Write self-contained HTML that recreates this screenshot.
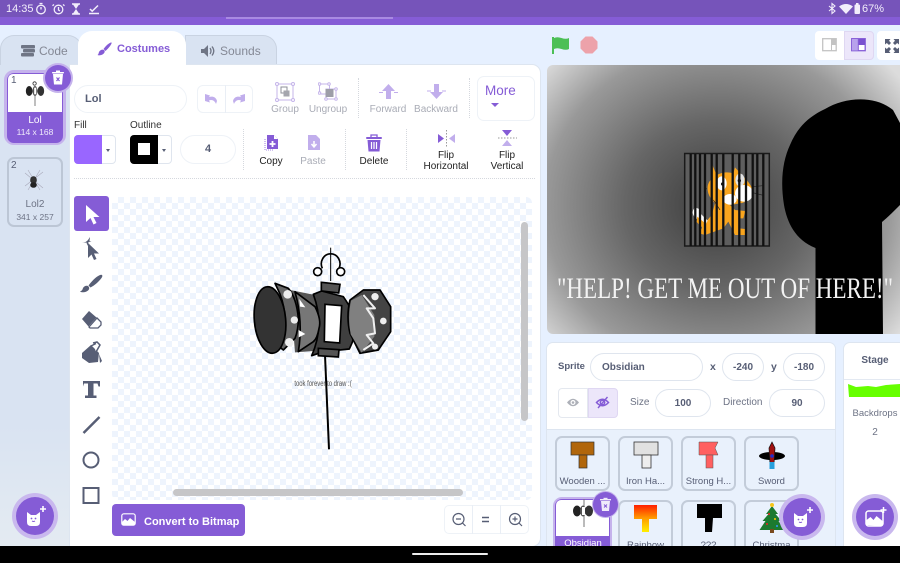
<!DOCTYPE html>
<html><head><meta charset="utf-8"><style>
html,body{margin:0;padding:0;width:900px;height:563px;overflow:hidden;background:#e6f0ff}
body{position:relative;font-family:"Liberation Sans",sans-serif;color:#575e75}
.a,.t,svg{position:absolute}
.t{white-space:nowrap;line-height:1;font-size:10px}
.c{transform:translateX(-50%)}
.lab{font-size:10px;color:#a9acb6}
.blk{font-size:10px;color:#222}
.sep{position:absolute;width:0;border-left:1px dotted #d5d8de}
.pill{position:absolute;background:#fff;border:1px solid #eef2f7;border-radius:16px;box-sizing:border-box;text-align:center;font-weight:bold;font-size:10px;color:#575e75}
.tile{position:absolute;width:55px;height:55px;box-sizing:border-box;border:2px solid #c3ccd9;border-radius:7px;background:#e9f1fc;overflow:hidden}
.tile span{position:absolute;left:0;right:0;top:39px;text-align:center;font-size:9.5px;color:#575e75;line-height:1;white-space:nowrap}
</style></head><body>
<!-- status bar -->
<div class="a" style="left:0;top:0;width:900px;height:17px;background:#7654ba"></div>
<div class="a" style="left:0;top:17px;width:900px;height:8px;background:#855cd6"></div>
<div class="a" style="left:226px;top:17px;width:167px;height:2px;background:#a98ae2"></div>
<span class="t" style="left:6px;top:4px;font-size:11px;color:#f2edfb">14:35</span>
<svg style="left:35px;top:2px" width="70" height="13" viewBox="0 0 70 13" fill="none" stroke="#f2edfb" stroke-width="1.3">
<circle cx="6" cy="7.5" r="4.3"/><path d="M4.5 1.5h3M6 7.5V5"/>
<circle cx="23.5" cy="7.5" r="4.3"/><path d="M19 2.5l-1.5 1.3M28 2.5l1.5 1.3M23.5 5v3l1.5 1"/>
<path d="M37 2h8M37 12h8" stroke-width="1.5"/><path d="M38 2.5h6L41 7l3 4.5h-6L41 7z" fill="#f2edfb" stroke="none"/>
<path d="M55 7l2.2 2.2L63 3.5M54 11.5h10" stroke-width="1.5"/></svg>
<svg style="left:828px;top:2px" width="36" height="13" viewBox="0 0 36 13" fill="none">
<path d="M1 4l6 5-3 2.5V1.500L7 4 1 9" stroke="#f2edfb" stroke-width="1.1"/>
<path d="M11 4.500Q18-.5 25 4.500L18 12z" fill="#f2edfb"/>
<rect x="26.500" y="2.500" width="5.500" height="9.500" rx="1" fill="#f2edfb"/><rect x="28" y="1" width="2.500" height="2" fill="#f2edfb"/></svg>
<span class="t" style="left:862px;top:4px;font-size:11px;color:#f2edfb">67%</span>

<!-- tabs -->
<div class="a" style="left:0;top:35px;width:82px;height:31px;background:#d9e3f2;border:1px solid #c9d3e2;border-bottom:0;border-radius:14px 14px 0 0;box-sizing:border-box"></div>
<div class="a" style="left:185px;top:35px;width:92px;height:31px;background:#d9e3f2;border:1px solid #c9d3e2;border-bottom:0;border-radius:0 14px 0 0;box-sizing:border-box"></div>
<div class="a" style="left:0;top:65px;width:70px;height:481px;background:linear-gradient(#d9e3f2 0,#d9e3f2 75%,#e4ebf2 100%)"></div>
<div class="a" style="left:70px;top:65px;width:470px;height:481px;background:#fff;border-radius:0 8px 8px 0;box-shadow:0 0 0 1px #dde5f0"></div>
<div class="a" style="left:78px;top:31px;width:108px;height:35px;background:#fff;border-radius:14px 14px 0 0"></div>
<svg style="left:20px;top:44px" width="16" height="13" viewBox="0 0 16 13" fill="#6f7585"><rect x="1" y="1" width="14" height="3.500" rx="1"/><rect x="3" y="5" width="12" height="3.500" rx="1"/><rect x="1" y="9" width="13" height="3.500" rx="1"/></svg>
<span class="t" style="left:39px;top:45px;font-size:12px;color:#848895">Code</span>
<svg style="left:97px;top:41px" width="16" height="16" viewBox="0 0 16 16" fill="#855cd6"><path d="M14.500 1.500C15.500 2 12 7 8.500 10L6.500 8C9 4.500 13 1 14.500 1.500zM2 11c1-2 3.500-3 5-2s.5 3.500-1.500 4.500-4 1-5 .5c1-.5 1-1.500 1.500-3z"/></svg>
<span class="t" style="left:117px;top:44px;font-size:11px;font-weight:bold;color:#855cd6">Costumes</span>
<svg style="left:201px;top:44px" width="15" height="14" viewBox="0 0 15 14" fill="#6f7585"><path d="M0 5h3l4-4v12l-4-4H0z"/><path d="M9 4q2 3 0 6M11 2.500q3.500 4.500 0 9" stroke="#6f7585" fill="none" stroke-width="1.300"/></svg>
<span class="t" style="left:220px;top:45px;font-size:12px;color:#848895">Sounds</span>

<!-- costume list -->
<div class="a" style="left:4px;top:70px;width:62px;height:75px;border:3px solid #c5b3ec;border-radius:10px;box-sizing:border-box"></div>
<div class="a" style="left:7px;top:73px;width:56px;height:70px;border-radius:7px;background:#855cd6;overflow:hidden"><div style="width:54px;height:38px;margin:1px 1px 0;background:#fff;border-radius:5px 5px 0 0"></div></div>
<span class="t" style="left:11px;top:76px;font-size:10px;color:#575e75">1</span>
<svg style="left:25px;top:79px" width="20" height="29" viewBox="0 0 24 30"><rect x="11.500" y="6" width="1" height="24" fill="#666"/><ellipse cx="5" cy="12" rx="4" ry="6" fill="#222"/><ellipse cx="12" cy="12" rx="3" ry="6" fill="#555"/><ellipse cx="19" cy="12" rx="4" ry="6" fill="#333"/><rect x="11" y="8" width="2.500" height="8" fill="#fff"/><circle cx="11.500" cy="3" r="2" fill="none" stroke="#333"/></svg>
<span class="t c" style="left:35px;top:116px;font-size:10px;color:#fff">Lol</span>
<span class="t c" style="left:35px;top:128px;font-size:8.500px;color:#f0ebfb">114 x 168</span>
<div class="a" style="left:45px;top:65px;width:26px;height:26px;border-radius:50%;background:#855cd6;box-shadow:0 0 0 2px #c5b3ec"></div>
<svg style="left:51px;top:70px" width="14" height="16" viewBox="0 0 14 16"><path d="M2 4h10l-1 10.500H3z" fill="#fff"/><rect x="1" y="2" width="12" height="1.500" rx=".7" fill="#fff"/><rect x="5" y=".5" width="4" height="1.500" fill="#fff"/><path d="M5.500 7.500l3 3.500M8.500 7.500l-3 3.500" stroke="#855cd6" stroke-width="1.200"/></svg>

<div class="a" style="left:7px;top:157px;width:56px;height:70px;border:2px solid #bcc6d5;border-radius:7px;box-sizing:border-box"></div>
<span class="t" style="left:11px;top:161px;font-size:10px;color:#575e75">2</span>
<svg style="left:22px;top:168px" width="24" height="24" viewBox="0 0 24 24" stroke="#aab" stroke-width=".6"><path d="M3 18L21 4M3 5l18 15M6 2l12 20M18 2L6 22"/><ellipse cx="11.500" cy="12" rx="3" ry="3.500" fill="#333" stroke="#222"/><ellipse cx="11.500" cy="17" rx="3" ry="2.500" fill="#222" stroke="#222"/></svg>
<span class="t c" style="left:35px;top:200px;font-size:10px;color:#6d7385">Lol2</span>
<span class="t c" style="left:35px;top:213px;font-size:8.500px;color:#6d7385">341 x 257</span>

<!-- toolbar row 1 -->
<div class="pill" style="left:74px;top:85px;width:113px;height:28px;border-radius:14px"></div>
<span class="t" style="left:85px;top:94px;font-size:11px;font-weight:bold;color:#575e75">Lol</span>
<div class="pill" style="left:197px;top:85px;width:56px;height:28px;border-radius:6px"></div>
<div class="a" style="left:225px;top:85px;width:1px;height:28px;background:#e9eef5"></div>
<svg style="left:204px;top:92px" width="42" height="14" viewBox="0 0 42 14" fill="#c1aeec"><path d="M1 2l5 1.500-1 1.500c3-1 7-.5 8 4l-1 3c-1-3-4-5-7-3.500l1 2L1 9z"/><path d="M41 2l-5 1.500 1 1.500c-3-1-7-.5-8 4l1 3c1-3 4-5 7-3.500l-1 2 5-1.500z"/></svg>
<svg style="left:275px;top:82px" width="20" height="20" viewBox="0 0 20 20" fill="none"><rect x="2" y="2" width="16" height="16" stroke="#c5b5ea"/><rect x="6" y="5" width="6" height="6" stroke="#8d8f99"/><rect x="8.500" y="8.500" width="6" height="6" fill="#a5a6ae"/><g fill="#fff" stroke="#c5b5ea"><circle cx="2" cy="2" r="1.500"/><circle cx="18" cy="2" r="1.500"/><circle cx="2" cy="18" r="1.500"/><circle cx="18" cy="18" r="1.500"/></g></svg>
<span class="t c lab" style="left:285px;top:105px">Group</span>
<svg style="left:318px;top:82px" width="20" height="20" viewBox="0 0 20 20" fill="none"><rect x="1.500" y="2" width="10" height="10" stroke="#c5b5ea"/><rect x="8" y="7" width="10" height="10" stroke="#c5b5ea"/><rect x="7.500" y="7" width="8" height="8" fill="#9d9ea8"/><g fill="#fff" stroke="#c5b5ea"><circle cx="1.500" cy="2" r="1.300"/><circle cx="11" cy="2" r="1.300"/><circle cx="1.500" cy="11" r="1.300"/><circle cx="18" cy="7" r="1.300"/><circle cx="18" cy="17" r="1.300"/><circle cx="8" cy="17" r="1.300"/></g></svg>
<span class="t c lab" style="left:328px;top:105px">Ungroup</span>
<div class="sep" style="left:358px;top:78px;height:40px"></div>
<svg style="left:379px;top:84px" width="19" height="16" viewBox="0 0 19 16" fill="#c1aeec"><path d="M9.500 0L16 7h-4v8H7V7H3z"/><path d="M0 8.500h4M15 8.500h4" stroke="#c1aeec" stroke-width="1"/></svg>
<span class="t c lab" style="left:388px;top:105px">Forward</span>
<svg style="left:427px;top:84px" width="19" height="16" viewBox="0 0 19 16" fill="#c1aeec"><path d="M9.500 15L16 8h-4V0H7v8H3z"/><path d="M0 7h4M15 7h4" stroke="#c1aeec" stroke-width="1"/></svg>
<span class="t c lab" style="left:436px;top:105px">Backward</span>
<div class="sep" style="left:469px;top:78px;height:40px"></div>
<div class="pill" style="left:477px;top:76px;width:58px;height:45px;border-radius:7px"></div>
<span class="t" style="left:485px;top:84px;font-size:13.500px;color:#855cd6">More</span>
<div class="a" style="left:491px;top:103px;width:0;height:0;border:4px solid transparent;border-top:4px solid #855cd6"></div>

<!-- toolbar row 2 -->
<span class="t" style="left:74px;top:121px;font-size:10px;color:#333">Fill</span>
<div class="pill" style="left:74px;top:135px;width:42px;height:29px;border-radius:4px;border-color:#dfe5ee"></div>
<div class="a" style="left:74px;top:135px;width:28px;height:29px;background:#9966ff;border-radius:4px 0 0 4px"></div>
<div class="a" style="left:106px;top:149px;border:2.500px solid transparent;border-top:3px solid #575e75"></div>
<span class="t" style="left:130px;top:121px;font-size:10px;color:#333">Outline</span>
<div class="pill" style="left:130px;top:135px;width:42px;height:29px;border-radius:4px;border-color:#dfe5ee"></div>
<div class="a" style="left:130px;top:135px;width:28px;height:29px;background:#000;border-radius:4px 0 0 4px"></div>
<div class="a" style="left:138px;top:143px;width:12px;height:12px;background:#fff"></div>
<div class="a" style="left:162px;top:149px;border:2.500px solid transparent;border-top:3px solid #575e75"></div>
<div class="pill" style="left:180px;top:135px;width:56px;height:29px;border-radius:15px;line-height:27px;font-size:11px">4</div>
<div class="sep" style="left:243px;top:129px;height:41px"></div>
<svg style="left:264px;top:134px" width="15" height="17" viewBox="0 0 15 17"><path d="M1 5v11h9" fill="none" stroke="#855cd6" stroke-width=".8" stroke-dasharray="1 1"/><path d="M3 1h7l4 4v10H3z" fill="#855cd6"/><path d="M10 1l4 4h-4z" fill="#fff"/><path d="M8.500 7v6M5.500 10h6" stroke="#fff" stroke-width="1.800"/></svg>
<span class="t c blk" style="left:271px;top:157px">Copy</span>
<svg style="left:306px;top:134px" width="15" height="17" viewBox="0 0 15 17"><path d="M2 1h8l4 4v11H2z" fill="#c1aeec"/><path d="M8 7v5M5.500 10l2.500 3 2.500-3" stroke="#fff" stroke-width="1.500" fill="none"/></svg>
<span class="t c lab" style="left:313px;top:157px">Paste</span>
<div class="sep" style="left:345px;top:129px;height:41px"></div>
<svg style="left:366px;top:134px" width="16" height="18" viewBox="0 0 16 18" fill="#855cd6"><rect x="0" y="3" width="16" height="2" rx="1"/><path d="M5 3V1h6v2" fill="none" stroke="#855cd6" stroke-width="1.300"/><path d="M1.500 6h13l-1 11.500h-11z"/><path d="M5.500 8v7M8 8v7M10.500 8v7" stroke="#fff" stroke-width="1.200"/></svg>
<span class="t c" style="left:374px;top:157px;font-size:10px;color:#222">Delete</span>
<div class="sep" style="left:406px;top:129px;height:41px"></div>
<svg style="left:437px;top:130px" width="19" height="17" viewBox="0 0 19 17"><path d="M1 4l6 4.500L1 13z" fill="#855cd6"/><path d="M18 4l-6 4.500 6 4.500z" fill="#c1aeec"/><path d="M9.500 0v17" stroke="#999" stroke-dasharray="1.500 1.500"/></svg>
<span class="t c blk" style="left:446px;top:151px">Flip</span>
<span class="t c blk" style="left:446px;top:162px">Horizontal</span>
<svg style="left:498px;top:129px" width="19" height="18" viewBox="0 0 19 18"><path d="M4 1h10l-5 6z" fill="#855cd6"/><path d="M4 17h10l-5-6z" fill="#c1aeec"/><path d="M0 9h19" stroke="#999" stroke-dasharray="1.500 1.500"/></svg>
<span class="t c blk" style="left:507px;top:151px">Flip</span>
<span class="t c blk" style="left:507px;top:162px">Vertical</span>
<div class="a" style="left:74px;top:178px;width:461px;border-top:1px dotted #d5d8de"></div>

<!-- tools -->
<div class="a" style="left:74px;top:196px;width:35px;height:35px;background:#855cd6;border-radius:3px"></div>
<svg style="left:74px;top:196px" width="35" height="315" viewBox="0 0 35 315">
<path d="M12 9v17l4.500-4 3 6.500 3-1.500-3-6h6z" fill="#fff"/>
<g fill="#575e75"><path d="M14 47v15l3.500-3.500 2.500 5.500 2.500-1-2.500-5.500h5z"/><path d="M8 47q4-.5 6-3l2-3-.5 4 2 .5-3 .5-1 4-1-3.500z"/>
<path d="M26 79c2.500-1 3 1 1.500 3-3 4-7 7.500-11 9.500l-2-2c3-4 7-8.500 11.500-10.500zM9 92c1-2 4-3 5.500-1.500s.5 4-2 5-5 1-6.500 0c1.500-.5 2.500-1.500 3-3.500z"/>
<path d="M8 123l7-8 7.500 6.500-8 9z"/><path d="M15 131l8-9 4 4v3l-3 3H16z" fill="#fff" stroke="#575e75" stroke-width="1.300"/>
<path d="M8 157l9-8 8 8-1 9-9 1-7-5z"/><path d="M17 150l5-2.500M19 147l4-1 3 3-4 7" fill="#fff" stroke="#575e75" stroke-width="1.500"/><path d="M25 158l3 7-2 2z"/>
<path d="M9 185h17v5.500h-1.500l-1-3h-4v12h3v2.500h-11.500v-2.500h3v-12h-4l-1 3H9z"/></g>
<path d="M9.500 237l16-16" stroke="#575e75" stroke-width="2.500" fill="none"/>
<circle cx="17" cy="264" r="7.500" stroke="#575e75" stroke-width="2" fill="none"/>
<rect x="9.500" y="292" width="15" height="15" stroke="#575e75" stroke-width="2" fill="none"/>
</svg>

<!-- canvas -->
<div class="a" style="left:112px;top:197px;width:420px;height:303px;background-color:#fff;background-image:conic-gradient(#eef4fd 25%,#fff 0 50%,#eef4fd 0 75%,#fff 0);background-size:12px 12px;border-radius:6px"></div>
<div class="a" style="left:173px;top:489px;width:290px;height:7px;background:#c6c6c8;border-radius:4px"></div>
<div class="a" style="left:521px;top:222px;width:7px;height:199px;background:#c6c6c8;border-radius:4px"></div>

<svg style="left:240px;top:235px" width="170" height="225" viewBox="0 0 510 675">
<path d="M272 38v52" stroke="#000" stroke-width="3"/>
<path d="M247 100a28 30 0 1 1 50 0" fill="none" stroke="#000" stroke-width="5"/>
<path d="M272 90v48" stroke="#000" stroke-width="3"/>
<circle cx="233" cy="110" r="12" fill="#fff" stroke="#000" stroke-width="5"/><circle cx="302" cy="110" r="12" fill="#fff" stroke="#000" stroke-width="5"/>
<path d="M255 360l12 283" stroke="#000" stroke-width="6"/>
<!-- underlay closes gaps between the head segments -->
<path d="M150 165L250 185 262 345 165 352z" fill="#555"/>
<!-- dark core -->
<path d="M220 178L245 168 310 185q35 50 36 85t-18 72l-78 8-35 12q40-90 5-184z" fill="#3f3f3f" stroke="#000" stroke-width="5" stroke-linejoin="round"/>
<!-- second blade -->
<path d="M165 170l60 45q20 40 12 65-5 30-17 40l-45 30q15-90-10-180z" fill="#777" stroke="#000" stroke-width="5" stroke-linejoin="round"/>
<!-- studded band -->
<path d="M105 145l40 15q25 30 30 90 0 35-10 60l-35 35-10-8q30-80 0-160z" fill="#666" stroke="#000" stroke-width="5" stroke-linejoin="round"/>
<ellipse cx="90" cy="255" rx="47" ry="100" fill="#333" stroke="#000" stroke-width="5" transform="rotate(-5 90 255)"/>
<circle cx="143" cy="178" r="13" fill="#eee"/><circle cx="163" cy="255" r="11" fill="#eee"/><circle cx="148" cy="322" r="13" fill="#eee"/>
<path d="M178 192l18 25-16-2zM176 285l20 12-20 10z" fill="#fff"/>
<!-- right head -->
<path d="M330 195l40-30h50l32 50v75l-37 55-55 10-30-60q-12-50 0-100z" fill="#444" stroke="#000" stroke-width="5" stroke-linejoin="round"/>
<path d="M333 197l32-17 38 60 0 65-38 48-33-55q-10-50 1-101z" fill="#808080"/>
<path d="M370 180l35 40-25 0 20 30 5 45-25 5 20 25-30 20" fill="none" stroke="#f0f0f0" stroke-width="6" stroke-linejoin="round"/>
<circle cx="405" cy="185" r="11" fill="#eee"/><circle cx="430" cy="258" r="10" fill="#eee"/><circle cx="405" cy="335" r="9" fill="#eee"/>
<path d="M244 142l56 6-4 26-52-6zM235 340l62 4-2 22-60-4z" fill="#555" stroke="#000" stroke-width="5"/>
<path d="M255 208l50 4-6 112-46-4z" fill="#fff" stroke="#000" stroke-width="5"/>
<text x="163" y="453" font-size="24" fill="#555" textLength="172" lengthAdjust="spacingAndGlyphs" font-family="Liberation Sans">took forever to draw :(</text>
</svg>

<!-- bottom -->
<div class="a" style="left:112px;top:504px;width:133px;height:32px;background:#855cd6;border-radius:4px"></div>
<svg style="left:121px;top:513px" width="15" height="13" viewBox="0 0 15 13"><rect x=".8" y=".8" width="13.400" height="11.400" rx="2" fill="#855cd6" stroke="#fff" stroke-width="1.200"/><path d="M1 12V9l3-3 2.500 2L9 5l5 4v3z" fill="#fff"/></svg>
<span class="t" style="left:144px;top:517px;font-size:11px;font-weight:bold;color:#fff">Convert to Bitmap</span>
<div class="pill" style="left:444px;top:505px;width:85px;height:29px;border-radius:5px"></div>
<div class="a" style="left:472px;top:505px;width:1px;height:29px;background:#e9eef5"></div>
<div class="a" style="left:500px;top:505px;width:1px;height:29px;background:#e9eef5"></div>
<svg style="left:450px;top:511px" width="75" height="16" viewBox="0 0 75 16" fill="none" stroke="#575e75" stroke-width="1.200"><circle cx="8.500" cy="8" r="5.500"/><path d="M12.500 12l3 3M6 8h5"/><path d="M32 6.500h7M32 10.500h7" stroke-width="1.600"/><circle cx="65" cy="8" r="5.500"/><path d="M69 12l3 3M62.500 8h5M65 5.500v5"/></svg>

<!-- FAB left -->
<div class="a" style="left:12px;top:493px;width:46px;height:46px;border-radius:50%;background:#c9b8ee"></div>
<div class="a" style="left:16px;top:497px;width:38px;height:38px;border-radius:50%;background:#855cd6"></div>
<svg style="left:23px;top:504px" width="24" height="24" viewBox="0 0 24 24"><path d="M4 8l4 3h5l4-3v10q0 4-4 4H8q-4 0-4-4z" fill="#fff"/><path d="M9 17q1.500 1 3 0" stroke="#855cd6" fill="none"/><circle cx="8.500" cy="14.500" r=".9" fill="#855cd6"/><circle cx="12.500" cy="14.500" r=".9" fill="#855cd6"/><path d="M20 2v6M17 5h6" stroke="#fff" stroke-width="1.600"/></svg>

<!-- stage controls -->
<svg style="left:552px;top:36px" width="18" height="18" viewBox="0 0 18 18"><path d="M1 1v17" stroke="#4cbf56" stroke-width="2"/><path d="M2 2q3-1.500 7.500 0T17 2v11q-3 1.500-7.500 0T2 13z" fill="#4cbf56"/></svg>
<svg style="left:580px;top:36px" width="18" height="18" viewBox="0 0 18 18"><path d="M5.500 0.500h7l5 5v7l-5 5h-7l-5-5v-7z" fill="#eda2aa"/></svg>
<div class="a" style="left:815px;top:31px;width:29px;height:29px;background:#fff;border-radius:4px 0 0 4px"></div>
<div class="a" style="left:844px;top:31px;width:30px;height:29px;background:#ece6fa;border:1px solid #dfd7f2;box-sizing:border-box;border-radius:0 4px 4px 0"></div>
<div class="a" style="left:877px;top:31px;width:23px;height:29px;background:#fff;border-radius:4px 0 0 4px"></div>
<svg style="left:822px;top:38px" width="15" height="14" viewBox="0 0 15 14"><rect x=".7" y=".7" width="13.500" height="12" fill="#fff" stroke="#c3c3c3" stroke-width="1.300"/><rect x="9.500" y="1" width="4.500" height="6" fill="#c3c3c3"/><rect x="9" y="1" width="1" height="11.500" fill="#c3c3c3"/></svg>
<svg style="left:851px;top:38px" width="15" height="14" viewBox="0 0 15 14"><rect x=".7" y=".7" width="13.500" height="12" fill="#fff" stroke="#855cd6" stroke-width="1.300"/><rect x="1" y="1" width="6" height="11.500" fill="#b8a2ec"/><rect x="7" y="1" width="7" height="6" fill="#7a50d0"/><rect x="6.800" y="1" width="1" height="11.500" fill="#855cd6"/></svg>
<svg style="left:885px;top:39px" width="14" height="14" viewBox="0 0 14 14" fill="#575e75"><path d="M0 0h5.500L4 1.800 6 4 4 6 1.800 4 0 5.500zM14 0H8.500L10 1.800 8 4l2 2 2.200-2L14 5.500zM0 14h5.500L4 12.200 6 10 4 8l-2.200 2L0 8.500zM14 14H8.500l1.500-1.800L8 10l2-2 2.200 2L14 8.500z"/></svg>

<!-- stage -->
<div class="a" style="left:547px;top:65px;width:353px;height:269px;overflow:hidden;border-radius:6px 0 0 6px;background:radial-gradient(ellipse 230px 210px at 170px 140px,#3b3b3b 0%,#666 40%,#999 75%,#dcdcdc 100%)">
<svg style="left:-547px;top:-65px" width="900" height="334" viewBox="0 0 900 334">
<path d="M815.500 334V248C795 240 787 222 784 205 780 180 783 160 790 145 797 128 808 117 825 109 845 97 875 95 893 110L900 123V205C893 212 888 217 882 222L883 334z" fill="#000"/>
<rect x="684.700" y="153.500" width="84.600" height="92.500" fill="#5e5e5e" stroke="#1a1a1a" stroke-width="1.500"/>
<g transform="translate(680,150) scale(.3333)">
<path d="M95 40L110 75Q135 62 160 70L165 52 195 85Q220 110 218 130 210 155 180 160L150 165 165 180 196 183 190 205 175 205 178 235 195 237 195 255 165 255 145 215 130 235 75 255 58 250 70 225 95 195 105 160Q90 145 85 130 78 105 92 90Z" fill="#f9a51e"/>
<ellipse cx="125" cy="100" rx="15" ry="21" fill="#fff"/><ellipse cx="180" cy="90" rx="14" ry="19" fill="#e3e3e3"/><circle cx="128" cy="102" r="5" fill="#111"/><circle cx="178" cy="92" r="5" fill="#111"/>
<ellipse cx="192" cy="130" rx="27" ry="25" fill="#fff"/><ellipse cx="150" cy="148" rx="20" ry="16" fill="#fff"/>
<path d="M45 172q-14 15 0 30l30 25 8-15-22-22 0-12z" fill="#fff"/><path d="M52 200l26 22-8 14-20-20z" fill="#f9a51e"/>
<path d="M218 110l30-3M218 128l32 8M100 150l20 30M80 115l-8 10" stroke="#222" stroke-width="2" fill="none"/>
</g>
<path d="M690.700 154v92M695.300 154v92M700 154v92M705 154v92M711.700 154v92M716.700 154v92M723.300 154v92M732.700 154v92M739.300 154v92M746 154v92M752.700 154v92M757.300 154v92M763.300 154v92" stroke="#111" stroke-width="2.300"/>
<text x="557" y="298" font-family="Liberation Serif" font-size="30" fill="#f3f3f3" textLength="336" lengthAdjust="spacingAndGlyphs">"HELP! GET ME OUT OF HERE!"</text>
</svg>
</div>

<!-- sprite panel -->
<div class="a" style="left:547px;top:343px;width:288px;height:203px;background:#e9f1fc;border-radius:6px 6px 0 0;overflow:hidden;box-shadow:0 0 0 1px #dde5f0"><div style="height:86px;background:#fff;border-bottom:1px solid #dde5f0"></div></div>
<span class="t" style="left:558px;top:362px;font-size:9.500px;font-weight:bold;color:#575e75">Sprite</span>
<div class="pill" style="left:590px;top:353px;width:113px;height:28px;text-align:left;padding-left:11px;line-height:28px;border-radius:14px;border-color:#dfe5ee">Obsidian</div>
<span class="t" style="left:710px;top:362px;font-size:10.500px;font-weight:bold">x</span>
<div class="pill" style="left:722px;top:353px;width:42px;height:28px;line-height:28px;border-color:#dfe5ee">-240</div>
<span class="t" style="left:771px;top:362px;font-size:10.500px;font-weight:bold">y</span>
<div class="pill" style="left:783px;top:353px;width:42px;height:28px;line-height:28px;border-color:#dfe5ee">-180</div>
<div class="a" style="left:558px;top:388px;width:30px;height:30px;background:#fff;border:1px solid #e4e8ef;box-sizing:border-box;border-radius:4px 0 0 4px"></div>
<div class="a" style="left:588px;top:388px;width:30px;height:30px;background:#ece6fa;border:1px solid #dfd7f2;box-sizing:border-box;border-radius:0 4px 4px 0"></div>
<svg style="left:566px;top:397px" width="14" height="11" viewBox="0 0 14 11"><path d="M1 5.500Q7-2 13 5.500 7 13 1 5.500z" fill="#adb0b8"/><circle cx="7" cy="5.500" r="2.500" fill="#fff"/><circle cx="7" cy="5.500" r="1.300" fill="#adb0b8"/></svg>
<svg style="left:595px;top:395px" width="15" height="15" viewBox="0 0 15 15" fill="none" stroke="#855cd6" stroke-width="1.500"><path d="M1.500 7.500Q7.500 1 13.500 7.500 7.500 14 1.500 7.500z"/><circle cx="7.500" cy="7.500" r="2.200"/><path d="M3 13L12.500 2" stroke-width="1.400"/></svg>
<span class="t" style="left:630px;top:398px;font-size:10px;color:#6d7385">Size</span>
<div class="pill" style="left:655px;top:389px;width:56px;height:28px;line-height:27px;border-color:#dfe5ee">100</div>
<span class="t" style="left:723px;top:398px;font-size:10px;color:#6d7385">Direction</span>
<div class="pill" style="left:769px;top:389px;width:56px;height:28px;line-height:27px;border-color:#dfe5ee">90</div>

<!-- sprite tiles -->
<div class="tile" style="left:555px;top:436px"><span>Wooden ...</span></div>
<div class="tile" style="left:618px;top:436px"><span>Iron Ha...</span></div>
<div class="tile" style="left:681px;top:436px"><span>Strong H...</span></div>
<div class="tile" style="left:744px;top:436px"><span>Sword</span></div>
<div class="tile" style="left:618px;top:500px"><span>Rainbow</span></div>
<div class="tile" style="left:681px;top:500px"><span>???</span></div>
<div class="tile" style="left:744px;top:500px"><span>Christma</span></div>
<div class="a" style="left:553px;top:497px;width:59px;height:60px;border:3px solid #c5b3ec;border-radius:9px;box-sizing:border-box"></div>
<div class="a" style="left:555px;top:499px;width:55px;height:56px;background:#855cd6;border-radius:7px;overflow:hidden"><div style="height:36px;margin:1px 1px 0;background:#fff;border-radius:5px 5px 0 0"></div></div>
<span class="t c" style="left:583px;top:539px;font-size:9.500px;color:#fff">Obsidian</span>

<svg style="left:555px;top:436px" width="250" height="118" viewBox="0 0 250 118">
<rect x="16" y="6" width="23" height="13" fill="#b1660b" stroke="#333" stroke-width=".7"/><rect x="24" y="19" width="8" height="13" fill="#b1660b" stroke="#333" stroke-width=".7"/>
<rect x="79" y="6" width="24" height="13" fill="#e1e1e1" stroke="#333" stroke-width=".8"/><rect x="87" y="19" width="9" height="13" fill="#eee" stroke="#333" stroke-width=".8"/>
<path d="M144 6h19l-3 6 3 7h-19z" fill="#ff6060" stroke="#555" stroke-width=".5"/><rect x="151" y="19" width="7" height="13" fill="#ff6060" stroke="#555" stroke-width=".5"/>
<ellipse cx="217" cy="20" rx="13" ry="4" fill="#000"/><path d="M217 6l3 6-1 16h-4l-1-16z" fill="#a01010" stroke="#111" stroke-width=".7"/><rect x="214.500" y="26" width="5" height="7" fill="#27a0dd"/><circle cx="217" cy="20" r="1.800" fill="#1c2fd0"/>
<g transform="translate(0,64)"><rect x="28.500" y="-1" width="1" height="28" fill="#777"/><ellipse cx="22" cy="11" rx="4" ry="5.500" fill="#222"/><ellipse cx="28" cy="11" rx="3" ry="5.500" fill="#555"/><ellipse cx="34" cy="11" rx="4" ry="5.500" fill="#333"/><rect x="27" y="7" width="3" height="8" fill="#fff"/></g>
<defs><linearGradient id="rb" gradientUnits="userSpaceOnUse" x1="0" y1="68" x2="0" y2="96"><stop offset="0" stop-color="#ff1500"/><stop offset=".5" stop-color="#ff9a00"/><stop offset="1" stop-color="#ffef00"/></linearGradient></defs>
<path d="M79 69h23v14h-8v13h-7V83h-8z" fill="url(#rb)"/>
<path d="M142 68h25v14h-9l-1 14h-7V82h-8z" fill="#000"/>
<path d="M217 70l-6 8h2.500l-6 7h3l-6 9h25l-6-9h3l-6-7h2.500z" fill="#1c7a2f"/><rect x="215" y="93" width="4" height="4" fill="#7a4a1d"/><circle cx="217" cy="69" r="2" fill="#f5c518"/><circle cx="214" cy="78" r="1" fill="#e22"/><circle cx="220" cy="83" r="1" fill="#fc0"/><circle cx="212" cy="88" r="1" fill="#e22"/><circle cx="222" cy="90" r="1" fill="#39f"/>
</svg>

<div class="a" style="left:593px;top:492px;width:25px;height:25px;border-radius:50%;background:#855cd6;box-shadow:0 0 0 1px #c5b3ec"></div>
<svg style="left:599px;top:497px" width="13" height="15" viewBox="0 0 13 15"><path d="M2 4h9l-1 10H3z" fill="#f0ebfb"/><rect x="1" y="2" width="11" height="1.400" fill="#f0ebfb"/><rect x="4.500" y=".8" width="4" height="1.400" fill="#f0ebfb"/><path d="M5 7.500l3 3M8 7.500l-3 3" stroke="#855cd6"/></svg>

<!-- stage panel -->
<div class="a" style="left:844px;top:343px;width:60px;height:203px;background:#fff;border-radius:6px 0 0 0;box-shadow:0 0 0 1px #dde5f0"></div>
<span class="t c" style="left:875px;top:356px;font-size:10px;font-weight:bold">Stage</span>
<div class="a" style="left:844px;top:379px;width:56px;height:1px;background:#e3e9f2"></div>
<svg style="left:847px;top:383px" width="53" height="15" viewBox="0 0 53 15"><path d="M1 1l8 3 12-1 8 1 10-2 14-1v13H2z" fill="#66ff00"/></svg>
<span class="t c" style="left:875px;top:409px;font-size:9.500px;color:#6d7385">Backdrops</span>
<span class="t c" style="left:875px;top:428px;font-size:10px;color:#6d7385">2</span>

<!-- FABs -->
<div class="a" style="left:779px;top:494px;width:46px;height:46px;border-radius:50%;background:#c9b8ee"></div>
<div class="a" style="left:783px;top:498px;width:38px;height:38px;border-radius:50%;background:#855cd6"></div>
<svg style="left:790px;top:505px" width="24" height="24" viewBox="0 0 24 24"><path d="M4 8l4 3h5l4-3v10q0 4-4 4H8q-4 0-4-4z" fill="#fff"/><path d="M9 17q1.500 1 3 0" stroke="#855cd6" fill="none"/><circle cx="8.500" cy="14.500" r=".9" fill="#855cd6"/><circle cx="12.500" cy="14.500" r=".9" fill="#855cd6"/><path d="M20 2v6M17 5h6" stroke="#fff" stroke-width="1.600"/></svg>
<div class="a" style="left:852px;top:494px;width:46px;height:46px;border-radius:50%;background:#c9b8ee"></div>
<div class="a" style="left:856px;top:498px;width:38px;height:38px;border-radius:50%;background:#855cd6"></div>
<svg style="left:865px;top:506px" width="22" height="22" viewBox="0 0 22 22"><rect x="1" y="5" width="17" height="15" rx="2.500" fill="#855cd6" stroke="#fff" stroke-width="1.500"/><path d="M1.500 19v-5l4-3 3 3 3-4 6 5v5z" fill="#fff"/><path d="M18.500 1v6M15.500 4h6" stroke="#fff" stroke-width="1.500"/></svg>

<!-- nav bar -->
<div class="a" style="left:0;top:546px;width:900px;height:17px;background:#000"></div>
<div class="a" style="left:412px;top:553px;width:76px;height:2px;background:#eee;border-radius:1px"></div>
</body></html>
